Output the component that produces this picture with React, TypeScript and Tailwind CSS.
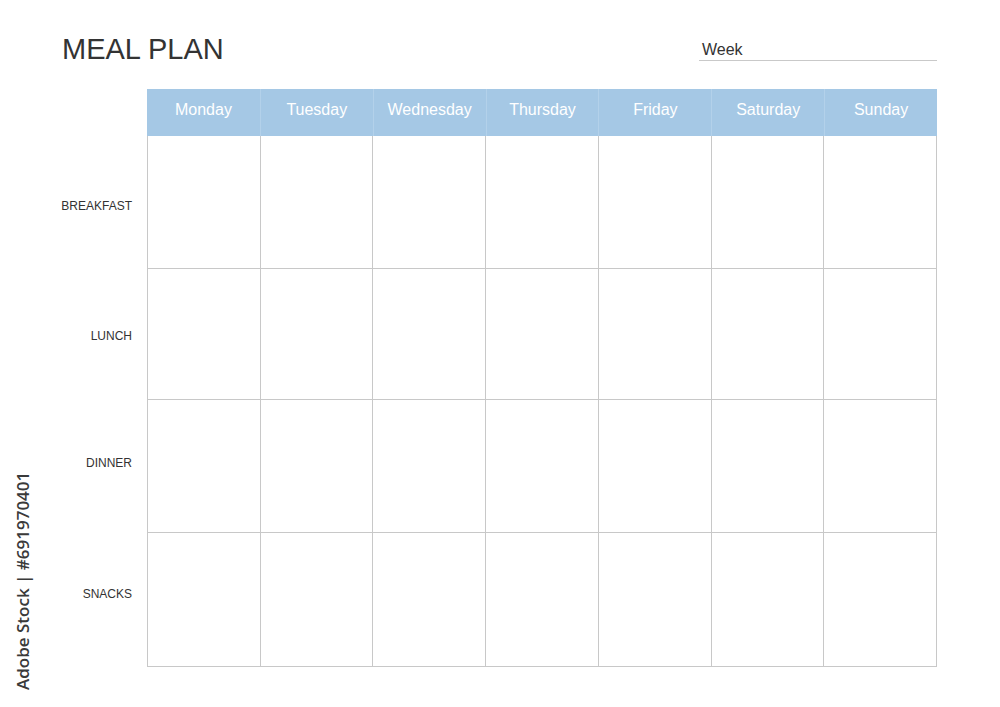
const days = ['Monday', 'Tuesday', 'Wednesday', 'Thursday', 'Friday', 'Saturday', 'Sunday'];

const meals = [
  { label: 'BREAKFAST', h: 'h-[133px]', pt: 'pt-[63px]' },
  { label: 'LUNCH', h: 'h-[131px]', pt: 'pt-[60px]' },
  { label: 'DINNER', h: 'h-[133px]', pt: 'pt-[56px]' },
  { label: 'SNACKS', h: 'h-[133px]', pt: 'pt-[54px]' },
];

export default function App() {
  return (
    <div className="relative w-[1000px] h-[707px] bg-white overflow-hidden font-['Liberation_Sans',Arial,sans-serif]">
      {/* top line: title + week */}
      <div className="flex items-start justify-between pl-[62px] pr-[63px] pt-[31px]">
        <h1 className="text-[29px] leading-[36px] text-[#333]">MEAL PLAN</h1>
        <div className="w-[238px] mt-[10px] border-b border-[#c9c9c9] pl-[3px] pb-[2px]">
          <span className="block text-[16px] leading-[17px] text-[#333]">Week</span>
        </div>
      </div>

      {/* planner */}
      <div className="flex mt-[22px]">
        <div className="w-[147px] pt-[47px]">
          {meals.map((m) => (
            <div key={m.label} className={`${m.h} ${m.pt} flex justify-end pr-[15px]`}>
              <span className="text-[12px] leading-[14px] text-[#333]">{m.label}</span>
            </div>
          ))}
        </div>

        <div className="w-[790px]">
          <div className="grid grid-cols-7 h-[47px] bg-[#a5c8e5]">
            {days.map((d, i) => (
              <div
                key={d}
                className={`flex items-center justify-center pb-[6px] text-[16px] text-white ${i > 0 ? 'border-l border-[#b3d1ea]' : ''}`}
              >
                {d}
              </div>
            ))}
          </div>
          <div className="border-l border-b border-[#c8c8c8]">
            {meals.map((m) => (
              <div key={m.label} className={`grid grid-cols-7 ${m.h} border-b border-[#c8c8c8] last:border-b-0`}>
                {days.map((d) => (
                  <div key={d} className="border-r border-[#c8c8c8]" />
                ))}
              </div>
            ))}
          </div>
        </div>
      </div>

      {/* stock id along the left edge */}
      <div className="absolute left-[12px] top-[690px] origin-top-left -rotate-90 whitespace-nowrap text-[17px] leading-[22px] font-semibold text-[#3a3a3a] font-['Open_Sans',sans-serif]">
        Adobe Stock | #691970401
      </div>
    </div>
  );
}
